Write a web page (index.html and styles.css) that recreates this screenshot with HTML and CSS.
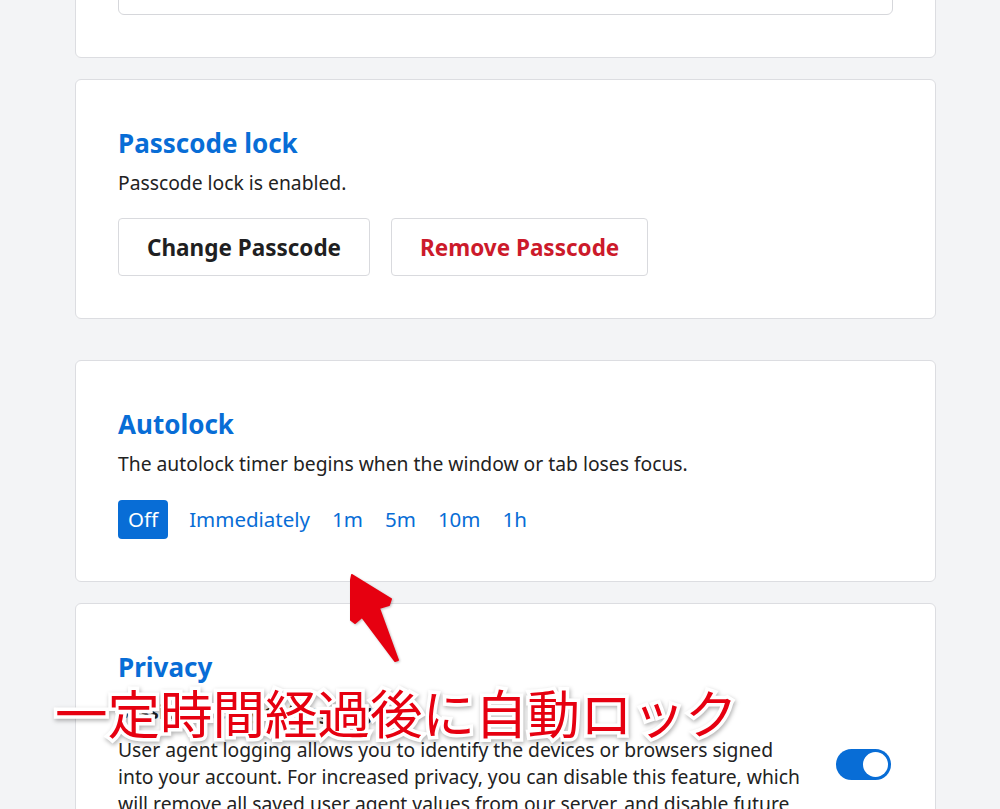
FILE: index.html
```html
<!DOCTYPE html>
<html lang="en">
<head>
<meta charset="utf-8">
<title>Security preferences</title>
<link rel="stylesheet" href="styles.css">
</head>
<body>
<main class="pane">
  <section class="group group-first">
    <div class="inner-box"></div>
  </section>

  <section class="group">
    <h2 class="title">Passcode lock</h2>
    <p class="desc">Passcode lock is enabled.</p>
    <div class="btn-row">
      <button class="btn">Change Passcode</button>
      <button class="btn btn-danger">Remove Passcode</button>
    </div>
  </section>

  <section class="group group-spaced">
    <h2 class="title">Autolock</h2>
    <p class="desc">The autolock timer begins when the window or tab loses focus.</p>
    <div class="options">
      <span class="opt opt-on">Off</span>
      <span class="opt">Immediately</span>
      <span class="opt">1m</span>
      <span class="opt">5m</span>
      <span class="opt">10m</span>
      <span class="opt">1h</span>
    </div>
  </section>

  <section class="group">
    <h2 class="title">Privacy</h2>
    <div class="setting">
      <div class="setting-text">
        <h3 class="subtitle">Session user agent logging</h3>
        <p class="body-text">User agent logging allows you to identify the devices or browsers signed into your account. For increased privacy, you can disable this feature, which will remove all saved user agent values from our server, and disable future logging of your user agent.</p>
      </div>
      <span class="toggle"><span class="knob"></span></span>
    </div>
  </section>
</main>

<svg class="callout-arrow" width="70" height="100" viewBox="340 570 70 100" aria-hidden="true">
  <polygon points="352,575 391,599 389,605 379,608 398,660 395,661 362,617 355,623 351,620 351,580" fill="#e60010" stroke="#e60010" stroke-width="2" stroke-linejoin="round"/>
</svg>
<div class="callout-label">一定時間経過後に自動ロック</div>
</body>
</html>
```

FILE: styles.css
```css
html, body {
  margin: 0;
  height: 809px;
  overflow: hidden;
}

body {
  position: relative;
  background: #f3f4f6;
  font-family: "Noto Sans", "Liberation Sans", sans-serif;
  color: #1f1f22;
}

.pane {
  display: flex;
  flex-direction: column;
  gap: 21px;
  width: 861px;
  margin-left: 75px;
}

.group {
  background: #fff;
  border: 1px solid #dcdde1;
  border-radius: 6px;
  padding: 42px;
}

.group-first {
  margin-top: -90px;
}

.group-spaced {
  margin-top: 20px;
}

.inner-box {
  height: 60px;
  border: 1px solid #d6d7db;
  border-radius: 6px;
}

.title {
  margin: 0 0 2px;
  font-size: 26px;
  line-height: 42px;
  font-weight: 700;
  color: #086dd6;
}

.desc {
  margin: 0;
  font-size: 19.3px;
  line-height: 34px;
  color: #222;
}

.btn-row {
  display: flex;
  gap: 21px;
  margin-top: 18px;
}

.btn {
  height: 58px;
  padding: 0 28px;
  background: #fff;
  border: 1px solid #d9dade;
  border-radius: 4px;
  font-family: inherit;
  font-size: 22.5px;
  font-weight: 700;
  color: #1f1f22;
}

.btn-danger {
  color: #cc1a2b;
}

.options {
  display: flex;
  align-items: center;
  margin-top: 19px;
}

.opt {
  padding: 0 11px;
  height: 39px;
  line-height: 39px;
  font-size: 20.5px;
  color: #086dd6;
  border-radius: 4px;
}

.opt-on {
  padding: 0 10px;
  margin-right: 10px;
  background: #086dd6;
  color: #fff;
}

.setting {
  display: flex;
  align-items: flex-start;
}

.setting-text {
  width: 690px;
}

.subtitle {
  margin: 9px 0 0;
  font-size: 19px;
  line-height: 26px;
  font-weight: 700;
  color: #222;
}

.body-text {
  margin: 11px 0 0;
  font-size: 19.3px;
  line-height: 27px;
  color: #222;
}

.toggle {
  flex: none;
  position: relative;
  width: 55px;
  height: 31px;
  margin: 59px 2px 0 auto;
  border-radius: 16px;
  background: #086dd6;
}

.knob {
  position: absolute;
  top: 3px;
  right: 3px;
  width: 25px;
  height: 25px;
  border-radius: 50%;
  background: #fff;
}

/* annotation layer */
.callout-arrow {
  position: absolute;
  left: 340px;
  top: 570px;
  filter: drop-shadow(1px 1px 1px rgba(0, 0, 0, 0.25));
}

.callout-label {
  position: absolute;
  left: 55px;
  top: 685px;
  font-family: "Noto Sans CJK JP", sans-serif;
  font-size: 52.5px;
  line-height: 52px;
  font-weight: 400;
  color: #e60010;
  -webkit-text-stroke: 7px #fff;
  paint-order: stroke fill;
  white-space: nowrap;
  filter: drop-shadow(1px 2px 2px rgba(0, 0, 0, 0.3));
}
```
